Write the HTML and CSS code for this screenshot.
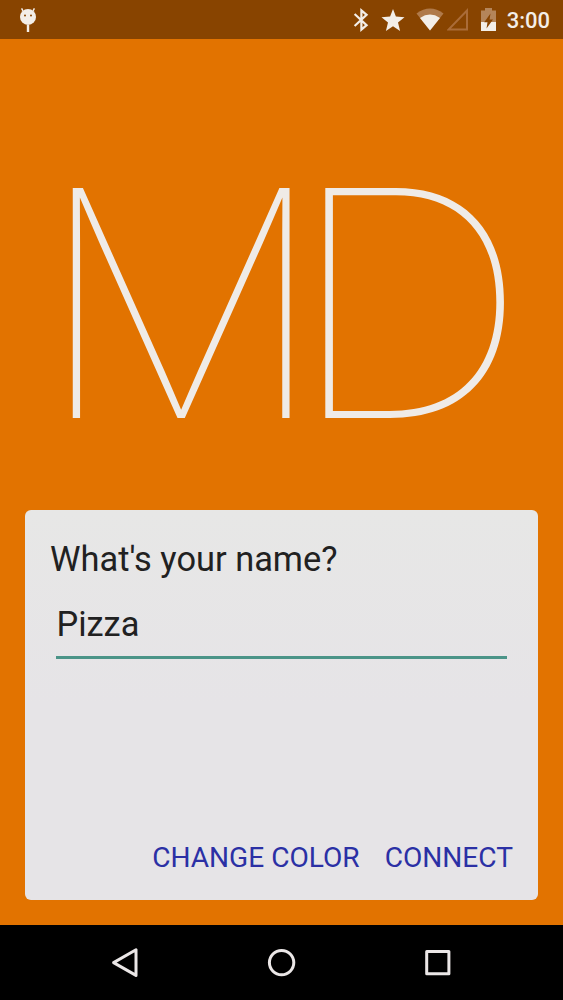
FILE: index.html
```html
<!DOCTYPE html>
<html lang="en">
<head>
    <meta charset="UTF-8">
    <meta name="viewport" content="width=device-width, initial-scale=1.0">
    <title>MD</title>
    <link rel="stylesheet" href="styles.css">
</head>
<body>

    <div class="status-bar">
        <svg class="droid" width="18" height="26" viewBox="0 0 18 26">
            <path d="M4 4L2.6 1.4M14 4L15.4 1.4" stroke="#f3eee8" stroke-width="1.5"/>
            <circle cx="9" cy="9.9" r="8" fill="#f3eee8"/>
            <rect x="7.8" y="18" width="2.4" height="7" fill="#f3eee8"/>
            <circle cx="6" cy="8.4" r="1" fill="#884400"/>
            <circle cx="12" cy="8.4" r="1" fill="#884400"/>
        </svg>
        <div class="status-icons">
            <svg width="16" height="24" viewBox="0 0 16 24">
                <path d="M1.6 6L13.6 17.2L8.4 21.6V2.4L13.6 6.8L1.6 18" fill="none" stroke="#f3eee8" stroke-width="2.2"/>
            </svg>
            <svg class="star" width="24" height="22" viewBox="0 0 24 22">
                <path d="M12 0L14.9 7.6L23.5 8.3L17 13.4L19.1 22L12 17.3L4.9 22L7 13.4L0.5 8.3L9.1 7.6Z" fill="#f3eee8"/>
            </svg>
            <svg class="wifi" width="28" height="23" viewBox="0 0 28 23">
                <path d="M0.5 5.5Q14 -4.5 27.5 5.5L14 22.5Z" fill="#b07a4a"/>
                <path d="M4 9.9Q14 3 24 9.9L14 22.5Z" fill="#f3eee8"/>
            </svg>
            <svg class="cell" width="22" height="23" viewBox="0 0 22 23">
                <path d="M1.8 21.4H20V2.5Z" fill="none" stroke="#aa6c38" stroke-width="2"/>
            </svg>
            <svg class="battery" width="15" height="24" viewBox="0 0 15 24">
                <path d="M0 2.5H4V0H11V2.5H15V14H0Z" fill="#b4855a"/>
                <path d="M0 14H15V23H0Z" fill="#f3eee8"/>
                <path d="M9.5 5.5L3.2 14.2H6.5L5.5 20.5L12 11.5H8.6Z" fill="#884400"/>
            </svg>
            <span class="clock">3:00</span>
        </div>
    </div>

    <div class="content">
        <div class="logo"><span class="logo-m">M</span><span class="logo-d">D</span></div>

        <div class="card">
            <label class="question" for="name">What's your name?</label>
            <input class="name" id="name" type="text" value="Pizza">
            <div class="actions">
                <button>CHANGE COLOR</button>
                <button>CONNECT</button>
            </div>
        </div>
    </div>

    <div class="nav-bar">
        <svg width="30" height="32" viewBox="0 0 30 32">
            <path d="M3.6 15.6L26 2.8V28.4Z" fill="none" stroke="#ebe7e7" stroke-width="3" stroke-linejoin="round"/>
        </svg>
        <svg width="30" height="32" viewBox="0 0 30 32">
            <circle cx="14.6" cy="15.6" r="12.2" fill="none" stroke="#ebe7e7" stroke-width="3"/>
        </svg>
        <svg width="30" height="32" viewBox="0 0 30 32">
            <rect x="3.7" y="4.5" width="22.2" height="22.2" fill="none" stroke="#ebe7e7" stroke-width="3" stroke-linejoin="round"/>
        </svg>
    </div>

</body>
</html>
```
FILE: styles.css
```css
* {
    box-sizing: border-box;
}

body {
    margin: 0;
    height: 1000px;
    display: flex;
    flex-direction: column;
    font-family: Roboto, sans-serif;
    background-color: #e27300;
    overflow: hidden;
}

svg {
    display: block;
    flex: none;
}

.status-bar {
    height: 39px;
    padding: 0 13px 0 19px;
    display: flex;
    justify-content: space-between;
    align-items: center;
    background-color: #884400;
}

.status-icons {
    display: flex;
    align-items: center;
}

.star {
    margin-left: 12px;
}

.wifi {
    margin-left: 11px;
}

.cell {
    margin-left: 3px;
}

.battery {
    margin: 0 11px 0 12px;
}

.clock {
    padding-top: 2px;
    font-size: 22px;
    font-weight: 500;
    color: #f3eee8;
}

.content {
    flex: 1;
    display: flex;
    flex-direction: column;
    padding: 0 25px 25px;
}

.logo {
    display: flex;
    height: 471px;
    padding: 106px 0 0 11px;
    font-family: Inter, sans-serif;
    font-size: 316px;
    font-weight: 100;
    line-height: 316px;
    color: #efebe7;
}

.logo-m {
    transform: scaleX(1.027);
    transform-origin: left;
}

.logo-d {
    margin-left: -32px;
    transform: scaleX(1.07);
    transform-origin: left;
}

.card {
    flex: 1;
    display: flex;
    flex-direction: column;
    padding: 26px 25px 22px;
    border-radius: 6px;
    background: linear-gradient(#e7e7e6, #e6e4e7 50%, #e6e4e7);
}

.question {
    font-size: 34.4px;
    line-height: 47px;
    color: #212121;
}

.name {
    margin: 18px 6px 0;
    padding: 0 0 9px 0.5px;
    height: 58px;
    border: none;
    border-bottom: 3px solid #4b9488;
    outline: none;
    background: none;
    font-family: inherit;
    font-size: 34.4px;
    color: #212121;
}

.actions {
    margin-top: auto;
    display: flex;
    justify-content: flex-end;
    gap: 25px;
}

.actions button {
    padding: 0;
    border: none;
    background: none;
    font-family: inherit;
    font-size: 28.1px;
    line-height: 40px;
    color: #2b30a5;
}

.nav-bar {
    height: 75px;
    padding: 0 110px;
    display: flex;
    justify-content: space-between;
    align-items: center;
    background-color: #000;
}
```
